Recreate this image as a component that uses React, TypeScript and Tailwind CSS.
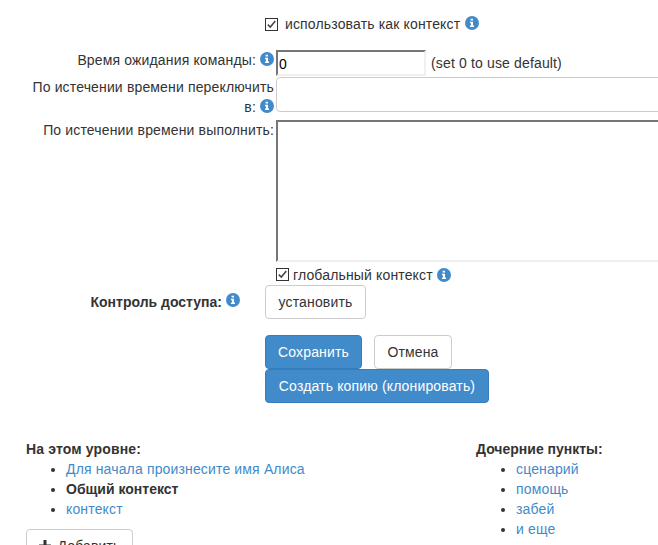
const Info = ({ className = "" }: { className?: string }) => (
  <svg viewBox="0 0 14 14" className={`inline-block w-[14px] h-[14px] ${className}`}>
    <circle cx="7" cy="7" r="7" fill="#428bca" />
    <path d="M5.600 2.800h2.400v1.800H5.600z M5 5.700h3v3.700h1v1.500H5V9.400h1V7.200H5z" fill="#fff" />
  </svg>
);

const Check = ({ className = "" }: { className?: string }) => (
  <span className={`block w-[13px] h-[13px] border border-[#333] bg-white shrink-0 ${className}`}>
    <svg viewBox="0 0 11 11" className="block w-[11px] h-[11px]">
      <path d="M1.800 5.600 L4.300 8.100 L9.300 2" fill="none" stroke="#444" strokeWidth="1.500" />
    </svg>
  </span>
);

const inset = "border-2 border-t-[#767676] border-l-[#767676] border-r-[#f0f0f0] border-b-[#f0f0f0] bg-white";
const btn = "flex items-center justify-center h-[34px] rounded-[4px] border text-[14px]";
const link = "text-[#428bca]";

const List = ({ items }: { items: { t: string; bold?: boolean }[] }) => (
  <ul className="list-disc pl-[40px]">
    {items.map((i) => (
      <li key={i.t} className="h-[20px] leading-[20px]">
        {i.bold ? <b className="tracking-normal">{i.t}</b> : <a className={link}>{i.t}</a>}
      </li>
    ))}
  </ul>
);

export default function App() {
  return (
    <div className="w-[658px] h-[545px] overflow-hidden bg-white text-[#333] text-[14px] leading-[20px] tracking-[0.15px] font-['Liberation_Sans',Arial,sans-serif]">
      <div className="flex items-center pl-[265px] pt-[14px] h-[34px]">
        <Check />
        <span className="ml-[7px]">использовать как контекст</span>
        <Info className="ml-[5px] -mt-[2px]" />
      </div>

      <div className="flex mt-[16px] h-[26px]">
        <label className="w-[276px] shrink-0 text-right pr-[2px]">
          Время ожидания команды: <Info className="align-[-1px]" />
        </label>
        <div className={`w-[150px] h-[26px] ${inset} pl-[1px] text-[14px] leading-[24px] text-black`}>0</div>
        <span className="ml-[5px] pt-[3px]">(set 0 to use default)</span>
      </div>

      <div className="flex mt-[1px] h-[37px]">
        <label className="w-[276px] shrink-0 text-right pr-[2px] pl-[30px] leading-[20px]">
          По истечении времени переключить в: <Info className="align-[-1px]" />
        </label>
        <div className="flex-1 h-[35px] -mr-[10px] border border-[#ccc] rounded-[4px] bg-white" />
      </div>

      <div className="flex mt-[6px] h-[142px]">
        <label className="w-[276px] shrink-0 text-right pr-[2px]">По истечении времени выполнить:</label>
        <div className={`flex-1 -mr-[10px] ${inset}`} />
      </div>

      <div className="flex items-center pl-[276px] h-[24px] mt-[1px]">
        <Check className="-mt-[1px]" />
        <span className="ml-[4px]">глобальный контекст</span>
        <Info className="ml-[4px]" />
      </div>

      <div className="flex -mt-[2px]">
        <label className="w-[265px] shrink-0 flex justify-end items-start pr-[25px] font-bold tracking-normal pt-[7px]">
          <span>Контроль доступа:</span>
          <Info className="ml-[4px] mt-[1px]" />
        </label>
        <button className={`${btn} w-[101px] border-[#ccc] bg-white`}>установить</button>
      </div>

      <div className="flex mt-[16px] pl-[265px]">
        <button className={`${btn} w-[97px] border-[#357ebd] bg-[#428bca] text-white`}>Сохранить</button>
        <button className={`${btn} w-[78px] ml-[12px] border-[#ccc] bg-white`}>Отмена</button>
      </div>
      <div className="pl-[265px]">
        <button className={`${btn} w-[224px] border-[#357ebd] bg-[#428bca] text-white`}>Создать копию (клонировать)</button>
      </div>

      <div className="flex mt-[36px]">
        <div className="w-[476px] pl-[26px] shrink-0">
          <b className="block h-[20px]">На этом уровне:</b>
          <List items={[{ t: "Для начала произнесите имя Алиса" }, { t: "Общий контекст", bold: true }, { t: "контекст" }]} />
          <button className={`${btn} w-[107px] mt-[10px] border-[#ccc] bg-white gap-[5px]`}>
            <svg viewBox="0 0 14 14" className="w-[14px] h-[14px]">
              <path d="M5.500 1h3v4.500H13v3H8.500V13h-3V8.500H1v-3h4.500z" fill="#333" />
            </svg>
            Добавить
          </button>
        </div>
        <div>
          <b className="block h-[20px] tracking-normal">Дочерние пункты:</b>
          <List items={[{ t: "сценарий" }, { t: "помощь" }, { t: "забей" }, { t: "и еще" }]} />
        </div>
      </div>
    </div>
  );
}
